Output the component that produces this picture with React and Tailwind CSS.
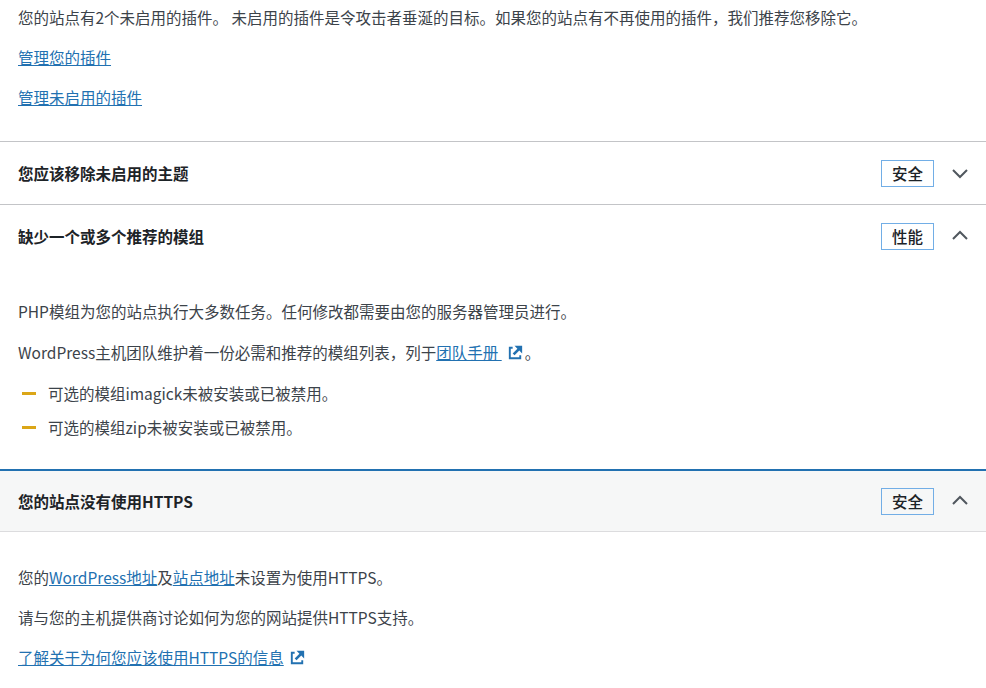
const font = { fontFamily: '"Noto Sans CJK SC", "Open Sans", sans-serif' };

const Chevron = ({ up }) => (
  <svg width="24" height="24" viewBox="0 0 24 24" fill="none" stroke="#50575e" strokeWidth="2">
    {up ? <path d="M5 15l7-7 7 7" /> : <path d="M5 9l7 7 7-7" />}
  </svg>
);

const Ext = () => (
  <svg width="19" height="19" viewBox="0 0 20 20" className="inline-block align-[-3px] ml-1" fill="#2271b1">
    <path d="M9 3h8v8l-3-3-5 5-2-2 5-5zM3 4h4v2H5v9h9v-2h2v4H3z" />
  </svg>
);

const Header = ({ title, badge, up, active }) => (
  <div
    className={`flex items-center justify-between pl-[18px] pr-[14px] h-[63px] border-t ${
      active ? "border-t-2 border-t-[#2271b1] bg-[#f6f7f7] border-b border-b-[#dcdcde]" : "border-t-[#c3c4c7]"
    }`}
  >
    <div className="text-[15.5px] font-semibold text-[#1d2327]">{title}</div>
    <div className="flex items-center gap-[14px]">
      <span className="border border-[#72aee6] px-[10px] h-[27px] flex items-center text-[15.5px] font-medium text-[#1d2327]">
        {badge}
      </span>
      <Chevron up={up} />
    </div>
  </div>
);

const A = ({ children }) => <a className="text-[#2271b1] underline">{children}</a>;

export default function App() {
  return (
    <div className="w-[986px] h-[688px] overflow-hidden bg-white text-[15.5px] leading-[21px] text-[#3c434a]" style={font}>
      <div className="px-[18px] pt-[7px] pb-[33px] flex flex-col gap-[19px]">
        <p>您的站点有2个未启用的插件。 未启用的插件是令攻击者垂涎的目标。如果您的站点有不再使用的插件，我们推荐您移除它。</p>
        <p><A>管理您的插件</A></p>
        <p><A>管理未启用的插件</A></p>
      </div>
      <Header title="您应该移除未启用的主题" badge="安全" />
      <Header title="缺少一个或多个推荐的模组" badge="性能" up />
      <div className="px-[18px] pt-[34px] pb-[31px]">
        <p className="mb-[20px]">PHP模组为您的站点执行大多数任务。任何修改都需要由您的服务器管理员进行。</p>
        <p className="mb-[20px]">WordPress主机团队维护着一份必需和推荐的模组列表，列于<A>团队手册 </A><Ext />。</p>
        <ul className="flex flex-col gap-[13px]">
          {["可选的模组imagick未被安装或已被禁用。", "可选的模组zip未被安装或已被禁用。"].map((t) => (
            <li key={t} className="flex items-center gap-[12px]">
              <span className="w-[14px] h-[3px] bg-[#dba617] ml-[4px]" />
              {t}
            </li>
          ))}
        </ul>
      </div>
      <Header title="您的站点没有使用HTTPS" badge="安全" up active />
      <div className="px-[18px] pt-[35px] flex flex-col gap-[19px]">
        <p>您的<A>WordPress地址</A>及<A>站点地址</A>未设置为使用HTTPS。</p>
        <p>请与您的主机提供商讨论如何为您的网站提供HTTPS支持。</p>
        <p><A>了解关于为何您应该使用HTTPS的信息</A><Ext /></p>
      </div>
    </div>
  );
}
